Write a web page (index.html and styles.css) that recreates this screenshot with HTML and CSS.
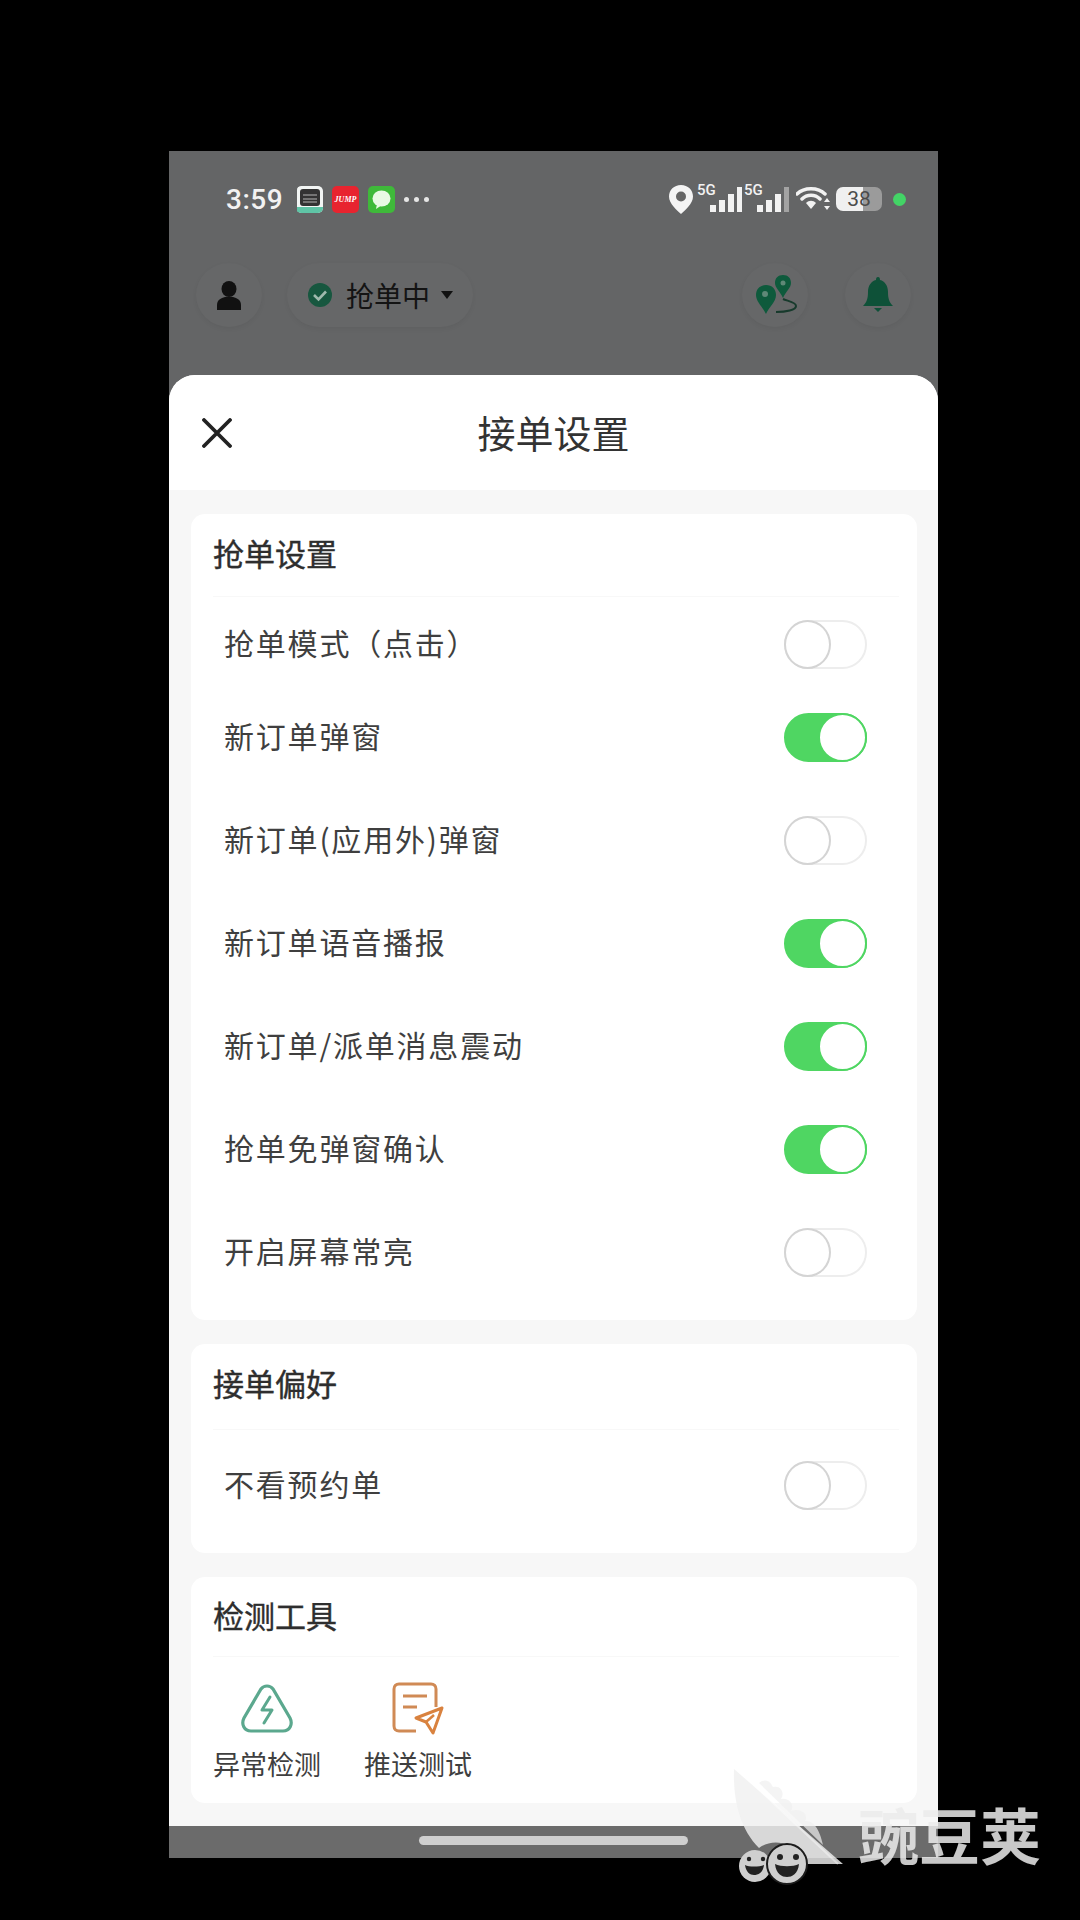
FILE: index.html
```html
<!DOCTYPE html>
<html lang="zh-CN">
<head>
    <meta charset="UTF-8">
    <meta name="viewport" content="width=device-width, initial-scale=1.0">
    <title>接单设置</title>
    <link rel="stylesheet" href="styles.css">
</head>
<body>
    <div class="phone">
        <div class="statusbar">
            <div class="status-left">
                <span class="clock">3:59</span>
                <span class="app-icon app-dark">
                    <svg viewBox="0 0 26 27" width="26" height="27">
                        <rect x="0" y="0" width="26" height="27" rx="4" fill="#f2f5f4"/>
                        <rect x="0" y="21" width="26" height="6" fill="#5fc4a6"/>
                        <rect x="3" y="3" width="20" height="17" rx="3" fill="#333"/>
                        <path d="M6 9h14M6 13h14M6 16h14" stroke="#8a8a8a" stroke-width="1.4"/>
                    </svg>
                </span>
                <span class="app-icon app-red">JUMP</span>
                <span class="app-icon app-green">
                    <svg viewBox="0 0 27 27" width="27" height="27">
                        <ellipse cx="13.500" cy="12.500" rx="9" ry="8" fill="#e9f9e4"/>
                        <path d="M9 18l-1 5 6-4z" fill="#e9f9e4"/>
                    </svg>
                </span>
                <span class="more-dots">
                    <i></i><i></i><i></i>
                </span>
            </div>
            <div class="status-right">
                <svg class="pin" viewBox="0 0 24 29" width="24" height="29">
                    <path d="M12 0C5 0 0 5 0 11.500 0 19 8 25 12 29c4-4 12-10 12-17.500C24 5 19 0 12 0z" fill="#f4f4f4"/>
                    <circle cx="12" cy="11.500" r="5" fill="#666"/>
                </svg>
                <span class="signal">
                    <b>5G</b>
                    <svg viewBox="0 0 34 26" width="34" height="26">
                        <path d="M1 18h6v7H1zM10 13h6v12h-6zM19 7h6v18h-6z" fill="#f2f2f2"/>
                        <path d="M28 0h5v25h-5z" fill="#f2f2f2"/>
                    </svg>
                </span>
                <span class="signal">
                    <b>5G</b>
                    <svg viewBox="0 0 34 26" width="34" height="26">
                        <path d="M1 18h6v7H1zM10 13h6v12h-6zM19 7h6v18h-6z" fill="#f2f2f2"/>
                        <path d="M28 0h5v25h-5z" fill="#a3a3a3"/>
                    </svg>
                </span>
                <svg class="wifi" viewBox="0 0 34 26" width="34" height="26">
                    <path d="M1 8C8 1 22 1 29 8M6 13c5-5 13-5 18 0" fill="none" stroke="#f2f2f2" stroke-width="3.500" stroke-linecap="round"/>
                    <path d="M10 17c3-3 7-3 10 0l-5 6z" fill="#f2f2f2"/>
                    <path d="M31 12l3 4h-6zM31 24l3-4h-6z" fill="#f2f2f2"/>
                </svg>
                <span class="battery"><span class="battery-num">38</span></span>
                <span class="dot-green"></span>
            </div>
        </div>

        <div class="topbar">
            <div class="topbar-left">
                <span class="round-btn">
                    <svg viewBox="0 0 24 29" width="24" height="29">
                        <ellipse cx="12" cy="8" rx="7.500" ry="8" fill="#111"/>
                        <path d="M0 29v-5c0-5 4-7 8-8h8c4 1 8 3 8 8v5z" fill="#111"/>
                    </svg>
                </span>
                <span class="status-pill">
                    <svg viewBox="0 0 24 24" width="24" height="24">
                        <circle cx="12" cy="12" r="12" fill="#17573f"/>
                        <path d="M6 12l4.500 4.500L18 8.500" fill="none" stroke="#9fb9ad" stroke-width="2.600"/>
                    </svg>
                    <span class="pill-text">抢单中</span>
                    <span class="caret"></span>
                </span>
            </div>
            <div class="topbar-right">
                <span class="round-btn">
                    <svg class="route-icon" viewBox="0 0 44 40" width="44" height="40">
                        <path d="M11 10C5 10 1 14 1 20c0 7 7 12 10 19 3-7 10-12 10-19 0-6-4-10-10-10z" fill="#0e5a3c"/>
                        <circle cx="10" cy="19" r="3" fill="#5f8877"/>
                        <path d="M28 0c-5 0-8 3-8 8 0 5 5 8 8 15 3-7 8-10 8-15 0-5-3-8-8-8z" fill="#0e5a3c"/>
                        <circle cx="28" cy="8" r="2.500" fill="#5f8877"/>
                        <path d="M28 24c4 2 13 3 13 7 0 4-10 6-20 6" fill="none" stroke="#173a2c" stroke-width="2"/>
                    </svg>
                </span>
                <span class="round-btn">
                    <svg viewBox="0 0 30 36" width="30" height="36">
                        <path d="M15 0c1.500 0 2 1 2 3 5 1 8 6 8 12 0 6 1 10 5 14H0c4-4 5-8 5-14 0-6 3-11 8-12 0-2 .5-3 2-3z" fill="#0e5138"/>
                        <path d="M11 31h8l-4 4z" fill="#0e5138"/>
                    </svg>
                </span>
            </div>
        </div>

        <div class="sheet">
            <div class="sheet-title">
                <svg class="close-x" viewBox="0 0 30 30" width="30" height="30">
                    <path d="M2 2l26 26M28 2L2 28" stroke="#222" stroke-width="3.800" stroke-linecap="round"/>
                </svg>
                <h1>接单设置</h1>
            </div>

            <div class="sheet-body">
                <section class="card card-main">
                    <h2 class="card-head">抢单设置</h2>
                    <div class="row row-first"><span>抢单模式（点击）</span><span class="toggle"></span></div>
                    <div class="row"><span>新订单弹窗</span><span class="toggle on"></span></div>
                    <div class="row"><span>新订单(应用外)弹窗</span><span class="toggle"></span></div>
                    <div class="row"><span>新订单语音播报</span><span class="toggle on"></span></div>
                    <div class="row"><span>新订单/派单消息震动</span><span class="toggle on"></span></div>
                    <div class="row"><span>抢单免弹窗确认</span><span class="toggle on"></span></div>
                    <div class="row"><span>开启屏幕常亮</span><span class="toggle"></span></div>
                </section>

                <section class="card card-pref">
                    <h2 class="card-head">接单偏好</h2>
                    <div class="row"><span>不看预约单</span><span class="toggle"></span></div>
                </section>

                <section class="card card-tools">
                    <h2 class="card-head">检测工具</h2>
                    <div class="tools">
                        <div class="tool">
                            <svg viewBox="0 0 54 50" width="54" height="50">
                                <path d="M21 5c3-4 9-4 12 0l17 29c3 6 0 13-7 13H11C4 47 1 40 4 34z" fill="none" stroke="#5ba88e" stroke-width="3.200"/>
                                <path d="M30 13l-8 13h10l-8 13" fill="none" stroke="#5ba88e" stroke-width="3" stroke-linejoin="round" stroke-linecap="round"/>
                            </svg>
                            <span>异常检测</span>
                        </div>
                        <div class="tool">
                            <svg viewBox="0 0 52 54" width="52" height="54">
                                <path d="M24 49H7c-3 0-5-2-5-5V7c0-3 2-5 5-5h32c3 0 5 2 5 5v18" fill="none" stroke="#d08a55" stroke-width="3"/>
                                <path d="M11 14h24M11 25h14" stroke="#d08a55" stroke-width="3"/>
                                <path d="M50 26L24 36l10 4 7 11z" fill="none" stroke="#d9823f" stroke-width="3" stroke-linejoin="round"/>
                                <path d="M34 40l8-7" stroke="#d9823f" stroke-width="2.500"/>
                            </svg>
                            <span>推送测试</span>
                        </div>
                    </div>
                </section>
            </div>
        </div>

        <div class="homebar"><span class="home-indicator"></span></div>
    </div>

    <div class="watermark">
        <svg viewBox="0 0 110 124" width="110" height="124">
            <path d="M1 1C0 30 6 60 26 80c8-6 20-8 30-2 6 6 8 14 8 18l46 0z" fill="rgba(240,240,240,.82)"/>
            <path d="M5 2l100 94" stroke="#fff" stroke-opacity=".4" stroke-width="2"/>
            <path d="M26 15c8-6 12 0 14 4 8-2 12 6 8 12 8-2 14 6 10 12 10-4 18 4 14 10 8 0 14 6 18 24z" fill="rgba(240,240,240,.7)"/>
            <circle cx="22" cy="98" r="16" fill="#cfcfcf"/>
            <circle cx="54" cy="96" r="20" fill="#cfcfcf" stroke="#1c1c1c" stroke-width="2"/>
            <circle cx="16" cy="91" r="2.200" fill="#222"/>
            <circle cx="30" cy="91" r="2.200" fill="#222"/>
            <path d="M12 97c4 2 14 2 19 0-1 8-6 10-10 10s-8-3-9-10z" fill="#222"/>
            <circle cx="47" cy="89" r="3" fill="#222"/>
            <circle cx="63" cy="89" r="3" fill="#222"/>
            <path d="M42 96c6 3 18 3 24 0-1 10-7 13-12 13s-11-3-12-13z" fill="#222"/>
        </svg>
        <span class="watermark-text">豌豆荚</span>
    </div>
</body>
</html>
```

FILE: styles.css
```css
*, *::after { box-sizing: border-box; }
html, body { margin: 0; padding: 0; }
body { width: 1080px; height: 1920px; background: #000; position: relative; overflow: hidden; font-family: "Noto Sans CJK SC", "Noto Sans", sans-serif; color: #3a3a3a; }

.phone { position: relative; width: 769px; height: 1707px; margin: 0; top: 151px; left: 169px; background: #646566; display: flex; flex-direction: column; }

/* status bar */
.statusbar { height: 96px; padding: 0 32px 0 57px; display: flex; align-items: center; justify-content: space-between; color: #f2f2f2; }
.status-left { display: flex; align-items: center; }
.clock { font-family: Roboto, sans-serif; font-size: 28px; font-weight: 500; letter-spacing: .5px; width: 70px; }
.app-icon { width: 27px; height: 27px; border-radius: 5px; margin-right: 9px; display: flex; align-items: center; justify-content: center; overflow: hidden; }
.app-red { background: #e8242f; color: #fff; font-family: "Liberation Serif", serif; font-size: 8px; font-weight: 700; font-style: italic; }
.app-green { background: #3fb93a; }
.more-dots { display: flex; gap: 5px; }
.more-dots i { width: 5px; height: 5px; border-radius: 50%; background: #e6e6e6; }
.status-right { display: flex; align-items: center; }
.pin { margin-right: 4px; }
.signal { position: relative; width: 47px; height: 30px; display: block; }
.signal b { position: absolute; left: 0; top: -2px; font-family: Roboto, sans-serif; font-size: 15px; font-weight: 500; line-height: 16px; }
.signal svg { position: absolute; right: 1px; bottom: 1px; }
.wifi { margin-left: 5px; margin-right: 6px; }
.battery { width: 46px; height: 24px; border-radius: 7px; background: linear-gradient(90deg, #f0f0f0 0 58%, #9b9b9b 58% 100%); display: flex; align-items: center; justify-content: center; }
.battery-num { font-family: Roboto, sans-serif; font-size: 21px; font-weight: 400; color: #4b4b4b; }
.dot-green { width: 13px; height: 13px; border-radius: 50%; background: #43d466; margin-left: 11px; }

/* dimmed top bar behind the sheet */
.topbar { height: 128px; padding: 16px 27px 0 27px; display: flex; justify-content: space-between; align-items: flex-start; }
.topbar-left, .topbar-right { display: flex; align-items: center; gap: 25px; }
.topbar-right { gap: 37px; }
.round-btn { width: 66px; height: 64px; border-radius: 50%; background: #666768; box-shadow: 0 2px 5px rgba(0,0,0,.05); display: flex; align-items: center; justify-content: center; }
.route-icon { margin-left: 4px; }
.status-pill { width: 186px; height: 64px; border-radius: 32px; background: #666768; box-shadow: 0 2px 5px rgba(0,0,0,.05); padding-left: 21px; display: flex; align-items: center; }
.pill-text { margin-left: 14px; font-size: 28px; color: #141414; }
.caret { margin-left: 11px; border-left: 6px solid transparent; border-right: 6px solid transparent; border-top: 8px solid #111; }

/* sheet */
.sheet { flex: 1; display: flex; flex-direction: column; border-radius: 26px 26px 0 0; background: #f7f7f7; overflow: hidden; }
.sheet-title { height: 115px; background: #fff; display: grid; grid-template-columns: 1fr auto 1fr; align-items: center; }
.sheet-title h1 { margin: -2px 0 0; font-size: 38px; font-weight: 400; color: #333; }
.close-x { margin-left: 33px; }
.sheet-body { padding: 24px 21px 23px 22px; display: flex; flex-direction: column; gap: 24px; flex: 1; }

.card { background: #fff; border-radius: 14px; padding: 0 18px 0 22px; }
.card-head { margin: 0; height: 83px; line-height: 78px; font-size: 31px; font-weight: 400; color: #2e2e2e; -webkit-text-stroke: .4px #2e2e2e; border-bottom: 1px solid #f8f8f8; }
.card-main { height: 806px; }
.card-pref { height: 209px; }
.card-tools { height: 226px; }
.card-tools .card-head { height: 80px; line-height: 76px; }
.card-pref .card-head { height: 86px; }

.row { height: 103px; padding: 0 32px 0 11px; display: flex; align-items: center; justify-content: space-between; font-size: 30px; letter-spacing: 1.800px; color: #3f3f3f; }
.row > span:first-child { margin-top: -2px; }
.row-first { height: 87px; padding-top: 4px; }
.card-pref .row { height: 108px; }

.toggle { width: 83px; height: 49px; border-radius: 25px; border: 2px solid #ededed; background: #fff; position: relative; flex: none; margin-top: 3px; }
.toggle::after { content: ""; position: absolute; left: -2px; top: -2px; width: 47px; height: 49px; border-radius: 50%; background: #fff; border: 2px solid #d4d4d4; }
.toggle.on { background: #4fd662; border-color: #4fd662; }
.toggle.on::after { left: auto; right: -2px; width: 49px; border-color: #4fd662; }

.tools { display: flex; padding-top: 25px; gap: 43px; }
.tool { width: 108px; display: flex; flex-direction: column; align-items: center; font-size: 27px; color: #3f3f3f; white-space: nowrap; }
.tool svg { height: 54px; }
.tool span { margin-top: 10px; line-height: 36px; }

.homebar { height: 32px; background: #6b6b6b; display: flex; justify-content: center; padding-top: 10px; }
.home-indicator { width: 269px; height: 9px; border-radius: 5px; background: #cfcfcf; }

/* watermark lies over everything */
.watermark { position: absolute; left: 733px; top: 1768px; display: flex; align-items: flex-start; }
.watermark-text { margin: 30px 0 0 15px; font-size: 61px; line-height: 72px; font-weight: 700; color: rgba(235,235,235,.85); white-space: nowrap; }
```
